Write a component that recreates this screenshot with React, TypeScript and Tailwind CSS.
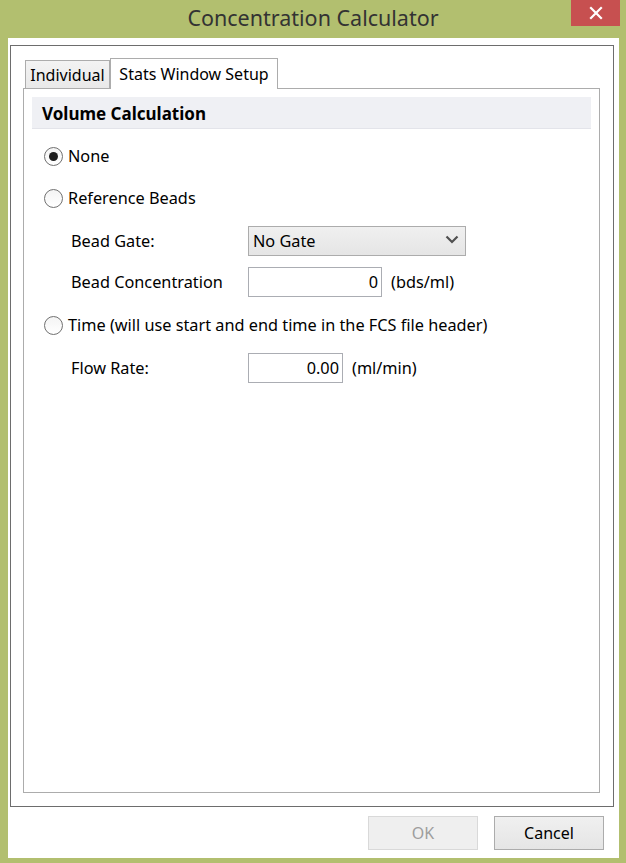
import React from "react";

const FONT = { fontFamily: '"Noto Sans", "Open Sans", Arial, sans-serif' };

const Radio = ({ checked = false, label }: { checked?: boolean; label: string }) => (
  <div className="flex h-[30px] items-center">
    <span className="flex h-[19px] w-[19px] items-center justify-center rounded-full border border-[#707070] bg-gradient-to-b from-[#f4f4f4] to-[#ffffff]">
      {checked && <span className="h-[9px] w-[9px] rounded-full bg-[#1e1e1e]" />}
    </span>
    <span className="ml-[5px] text-[16.3px] text-black">{label}</span>
  </div>
);

const FieldRow = ({ label, children }: { label: string; children: React.ReactNode }) => (
  <div className="flex h-[30px] items-center pl-[27px]">
    <span className="w-[177px] text-[16.3px] text-black">{label}</span>
    {children}
  </div>
);

const NumberBox = ({ value, width, unit }: { value: string; width: string; unit: string }) => (
  <>
    <div className={`flex h-[30px] items-center justify-end border border-[#abadb3] bg-white pr-[3px] text-[16.3px] text-black ${width}`}>
      {value}
    </div>
    <span className="ml-[9px] text-[16.3px] text-black">{unit}</span>
  </>
);

const Button = ({ label, disabled = false }: { label: string; disabled?: boolean }) => (
  <div
    className={
      disabled
        ? "flex h-[34px] w-[110px] items-center justify-center border border-[#d9d9d9] bg-[#efefef] text-[16px] text-[#9d9d9d]"
        : "flex h-[34px] w-[110px] items-center justify-center border border-[#acacac] bg-gradient-to-b from-[#f0f0f0] to-[#e5e5e5] text-[16px] text-black"
    }
  >
    {label}
  </div>
);

export default function App() {
  return (
    <div className="flex h-[863px] w-[626px] flex-col bg-[#b2bf6f]" style={FONT}>
      {/* title bar */}
      <div className="relative flex h-[38px] shrink-0 items-center justify-center">
        <span className="mt-[-2px] text-[21.5px] text-[#333333]">Concentration Calculator</span>
        <div className="absolute right-[6px] top-0 flex h-[26px] w-[49px] items-center justify-center bg-[#c75050]">
          <svg width="14" height="14" viewBox="0 0 14 14">
            <path d="M2 2 L12 12 M12 2 L2 12" stroke="#ffffff" strokeWidth="2.2" strokeLinecap="square" />
          </svg>
        </div>
      </div>

      {/* client */}
      <div className="mb-[5px] ml-[8px] mr-[7px] flex flex-1 flex-col bg-white">
        <div className="ml-[2px] mr-[5px] mt-[7px] flex h-[762px] flex-col border border-[#6d6d6d]">
          {/* tabs */}
          <div className="ml-[14px] mt-[12px] flex h-[30px] items-end">
            <div className="flex h-[28px] w-[85px] items-center justify-center border border-b-0 border-[#acacac] bg-gradient-to-b from-[#f3f3f3] to-[#e9e9e9] text-[16px] text-black">
              Individual
            </div>
            <div className="relative z-10 mb-[-1px] flex h-[31px] w-[168px] items-center justify-center border border-b-0 border-[#acacac] bg-white text-[16px] text-black">
              Stats Window Setup
            </div>
          </div>

          {/* panel */}
          <div className="mb-[13px] ml-[12px] mr-[13px] flex flex-1 flex-col border border-[#acacac] bg-white px-[8px] pt-[8px]">
            <div className="flex h-[32px] items-center border-b border-[#e3e4ea] bg-[#eff0f4] pl-[10px] pt-[3px] text-[17px] font-bold text-black">
              Volume Calculation
            </div>

            <div className="flex flex-col pl-[12px]">
              <div className="mt-[12px]">
                <Radio checked label="None" />
              </div>
              <div className="mt-[12px]">
                <Radio label="Reference Beads" />
              </div>
              <div className="mt-[13px]">
                <FieldRow label="Bead Gate:">
                  <div className="flex h-[30px] w-[218px] items-center justify-between border border-[#acacac] bg-gradient-to-b from-[#f0f0f0] to-[#e5e5e5] pl-[4px] pr-[6px] text-[16.3px] text-black">
                    <span>No Gate</span>
                    <svg width="14" height="9" viewBox="0 0 14 9" className="mb-[4px]">
                      <path d="M1.5 1.5 L7 7 L12.5 1.5" stroke="#505050" strokeWidth="2.2" fill="none" />
                    </svg>
                  </div>
                </FieldRow>
              </div>
              <div className="mt-[11px]">
                <FieldRow label="Bead Concentration">
                  <NumberBox value="0" width="w-[134px]" unit="(bds/ml)" />
                </FieldRow>
              </div>
              <div className="mt-[13px]">
                <Radio label="Time (will use start and end time in the FCS file header)" />
              </div>
              <div className="mt-[13px]">
                <FieldRow label="Flow Rate:">
                  <NumberBox value="0.00" width="w-[95px]" unit="(ml/min)" />
                </FieldRow>
              </div>
            </div>
          </div>
        </div>

        {/* buttons */}
        <div className="mr-[15px] mt-[9px] flex justify-end gap-[16px]">
          <Button label="OK" disabled />
          <Button label="Cancel" />
        </div>
      </div>
    </div>
  );
}
